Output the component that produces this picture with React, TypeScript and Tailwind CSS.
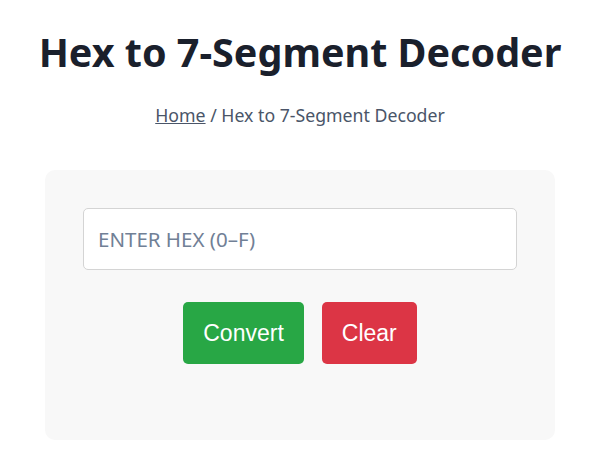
import React from "react";

export default function App() {
  return (
    <div className="min-h-[463px] w-[600px] bg-white flex flex-col items-center">
      <h1 className="mt-[26px] text-[39.5px] leading-[52px] font-bold text-[#1a202c] font-['Noto_Sans',sans-serif] text-center">
        Hex to 7-Segment Decoder
      </h1>
      <div className="mt-[25px] text-[17.7px] leading-[24px] text-[#4a5568] font-['Noto_Sans',sans-serif]">
        <a className="underline text-[#4a5568]" href="#">Home</a> / Hex to 7-Segment Decoder
      </div>
      <div className="mt-[43px] w-[510px] h-[270px] bg-[#f8f8f8] rounded-[10px] px-[38px] pt-[38px] flex flex-col items-center">
        <input
          className="w-[434px] h-[62px] bg-white border border-[#d4d4d4] rounded-[5px] px-[14px] text-[20.5px] font-['Noto_Sans',sans-serif] placeholder:text-[#718096] outline-none"
          placeholder="ENTER HEX (0–F)"
        />
        <div className="mt-[32px] flex gap-[18px]">
          <button className="h-[62px] px-[20px] rounded-[5px] bg-[#28a745] text-white text-[23px] font-['Liberation_Sans',Arial,sans-serif]">
            Convert
          </button>
          <button className="h-[62px] px-[20px] rounded-[5px] bg-[#dc3545] text-white text-[23px] font-['Liberation_Sans',Arial,sans-serif]">
            Clear
          </button>
        </div>
      </div>
    </div>
  );
}
